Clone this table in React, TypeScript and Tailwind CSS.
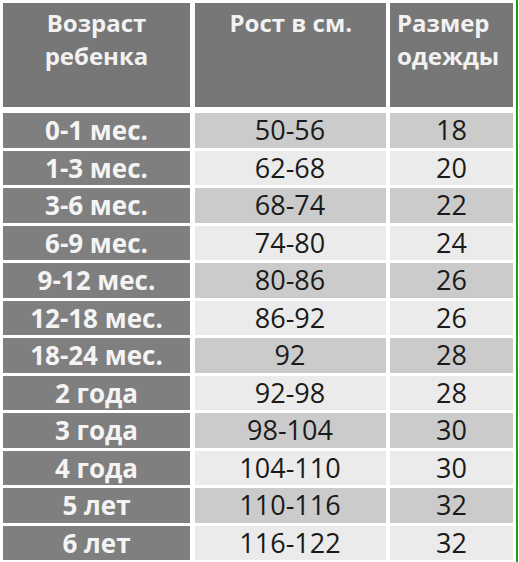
import React from "react";

const rows: [string, string, string][] = [
  ["0-1 мес.", "50-56", "18"],
  ["1-3 мес.", "62-68", "20"],
  ["3-6 мес.", "68-74", "22"],
  ["6-9 мес.", "74-80", "24"],
  ["9-12 мес.", "80-86", "26"],
  ["12-18 мес.", "86-92", "26"],
  ["18-24 мес.", "92", "28"],
  ["2 года", "92-98", "28"],
  ["3 года", "98-104", "30"],
  ["4 года", "104-110", "30"],
  ["5 лет", "110-116", "32"],
  ["6 лет", "116-122", "32"],
];

export default function App() {
  return (
    <div
      className="w-[518px] h-[562px] bg-white border-r-2 border-[#229a22] pl-[3px] pt-[3px] overflow-hidden"
      style={{ fontFamily: '"Open Sans", "DejaVu Sans", sans-serif' }}
    >
      <div className="w-[510px] grid grid-cols-[187px_191px_123px] gap-x-[4.5px]">
        <div className="h-[104px] bg-[#777777] text-[#f2f2f2] font-bold text-[24px] leading-[33px] text-center pt-[3px]">
          Возраст
          <br />
          ребенка
        </div>
        <div className="h-[104px] bg-[#777777] text-[#f2f2f2] font-bold text-[24px] leading-[33px] pl-[35px] pt-[3px]">
          Рост в см.
        </div>
        <div className="h-[104px] bg-[#777777] text-[#f2f2f2] font-bold text-[24px] leading-[33px] pl-[7px] pt-[3px]">
          Размер
          <br />
          одежды
        </div>
      </div>
      <div className="w-[510px] mt-[6px] grid grid-cols-[187px_191px_123px] gap-x-[4.5px] gap-y-[3px]">
        {rows.map(([age, h, s], i) => {
          const light = i % 2 === 0 ? "bg-[#cbcbcb]" : "bg-[#ebebeb]";
          return (
            <React.Fragment key={i}>
              <div className="h-[34.5px] bg-[#7f7f7f] text-[#f4f4f4] font-bold text-[26px] leading-[32px] flex items-center justify-center">
                {age}
              </div>
              <div className={`h-[34.5px] ${light} text-[#1a1a1a] text-[27px] leading-[32px] flex items-center justify-center`}>
                {h}
              </div>
              <div className={`h-[34.5px] ${light} text-[#1a1a1a] text-[27px] leading-[32px] flex items-center justify-center`}>
                {s}
              </div>
            </React.Fragment>
          );
        })}
      </div>
    </div>
  );
}
